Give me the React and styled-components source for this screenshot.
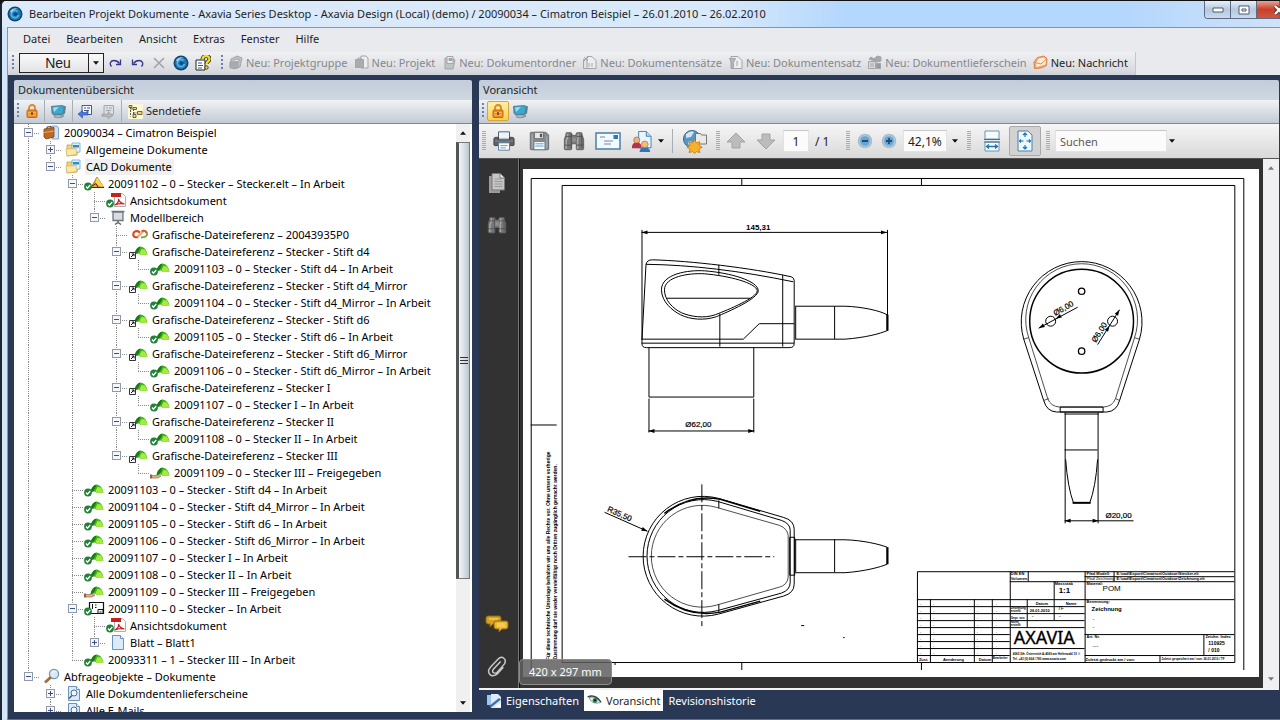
import React from "react";
import styled, { createGlobalStyle, css } from "styled-components";

const UI = '"Noto Sans", "Open Sans", sans-serif';
const NAVY = "#293955";

const Global = createGlobalStyle`
  *, *::before, *::after { box-sizing: border-box; }
  html, body, #root { height: 100%; }
  body { margin: 0; background: #111; overflow: hidden; font-family: ${UI}; font-size: 11px; color: #1e1e1e; }
  button, input { font: inherit; color: inherit; }
  h1, h2, p { margin: 0; font-weight: 400; }
  svg { display: block; flex: none; }
`;

/* ---------- window frame ---------- */
const Window = styled.div`
  height: 100vh;
  display: flex;
  flex-direction: column;
  border-top: 1px solid #111;
  border-left: 2px solid #1d2733;
  border-radius: 6px 0 0 0;
  overflow: hidden;
  background: linear-gradient(90deg, #d3e6fa 0, #c4defa 60%, #b3d5fb 62%);
`;
const TitleBar = styled.header`
  flex: none;
  height: 26px;
  display: flex;
  align-items: center;
  gap: 6px;
  padding-left: 5px;
  background: linear-gradient(90deg, #dceafa 0, #d8e9fb 56%, #b4d7fd 66%, #b4d7fd 88%, #cfe2f8 100%);
`;
const Title = styled.h1`
  flex: 1;
  font-size: 11px;
  line-height: 24px;
  white-space: nowrap;
`;
const Controls = styled.div`
  align-self: flex-start;
  display: flex;
  height: 18px;
  border: 1px solid #5b6b85;
  border-width: 0 0 1px 1px;
  border-radius: 0 0 0 4px;
  overflow: hidden;
`;
const ControlButton = styled.button`
  width: ${(p) => p.$width || 26}px;
  height: 17px;
  padding: 0 0 0 ${(p) => p.$inset || 0}px;
  display: grid;
  place-items: center;
  border: 0;
  border-right: 1px solid #5b6b85;
  background: ${(p) => (p.$close ? "linear-gradient(#e7a396, #c8402a 50%, #d2563c)" : "linear-gradient(#e6f0fa, #b5c8dd 50%, #c9dbee)")};
`;
const Client = styled.div`
  flex: 1;
  min-height: 0;
  margin-left: 5px;
  display: flex;
  flex-direction: column;
  border: 1px solid #8494ab;
  border-right: 0;
  border-bottom: 1px solid #5d6e8e;
  background: #e9eaed;
`;
const MenuBar = styled.nav`
  flex: none;
  height: 24px;
  display: flex;
  align-items: center;
  gap: 16px;
  padding: 0 0 2px 15px;
`;
const MenuItem = styled.button`
  border: 0;
  padding: 0;
  background: none;
  font-size: 11px;
  line-height: 20px;
`;
const ToolStrip = styled.div`
  flex: none;
  align-self: flex-start;
  height: 23px;
  display: flex;
  align-items: center;
  padding: 0 7px 2px 4px;
  border-right: 1px solid #c3c6cc;
  background: linear-gradient(#f0f1f3, #d9dbe0 80%, #cdd0d6);
`;
const Grip = styled.span`
  flex: none;
  width: 2px;
  height: ${(p) => p.$height || 16}px;
  margin: 0 ${(p) => p.$after || 4}px 0 ${(p) => p.$before || 0}px;
  background: repeating-linear-gradient(#6680b5 0 2px, transparent 2px 4px);
`;
const NewButton = styled.button`
  width: 70px;
  height: 20px;
  padding: 0 0 0 8px;
  border: 1px solid #222;
  background: linear-gradient(#fafafa, #e2e3e6);
  font: 14px/16px "Liberation Sans", Arial, sans-serif;
`;
const DropButton = styled.button`
  width: 16px;
  height: 20px;
  margin-left: -1px;
  padding: 0;
  display: grid;
  place-items: center;
  border: 1px solid #222;
  background: linear-gradient(#fafafa, #e2e3e6);
`;
const IconButton = styled.button`
  flex: none;
  width: ${(p) => p.$width || 22}px;
  height: ${(p) => p.$height || 20}px;
  padding: 0;
  display: grid;
  place-items: center;
  border: 1px solid ${(p) => p.$edge || "transparent"};
  border-radius: 2px;
  background: ${(p) => p.$fill || "none"};
`;
const ActionButton = styled.button`
  display: flex;
  align-items: center;
  gap: 3px;
  padding: 0;
  margin-left: ${(p) => p.$first ? 3 : 6}px;
  border: 0;
  background: none;
  color: ${(p) => (p.$live ? "#1e1e1e" : "#85878c")};
  font-size: 11px;
  line-height: 20px;
  white-space: nowrap;
`;

/* ---------- panels ---------- */
const Workspace = styled.main`
  flex: 1;
  min-height: 0;
  display: grid;
  grid-template-columns: minmax(0, 458px) minmax(0, 1fr);
  grid-template-rows: minmax(0, 1fr);
  gap: 7px;
  padding: 5px 1px 7px 6px;
  background: ${NAVY};
`;
const Panel = styled.section`
  min-width: 0;
  min-height: 0;
  display: flex;
  flex-direction: column;
`;
const PanelTitle = styled.h2`
  flex: none;
  height: 20px;
  padding-left: 4px;
  background: linear-gradient(#c3cddb, #cdd8e2);
  border-radius: 2px 2px 0 0;
  font-size: 11px;
  line-height: 20px;
`;
const PanelTools = styled.div`
  flex: none;
  height: 24px;
  display: flex;
  align-items: center;
  padding: 0 0 1px 3px;
  border-bottom: 1px solid #7d8798;
  background: linear-gradient(#f1f3f5, #c3cad4);
`;
const Split = styled.span`
  flex: none;
  width: 1px;
  height: ${(p) => p.$height || 22}px;
  margin: 0 ${(p) => p.$gap || 2}px;
  background: #a8aeb8;
`;

/* ---------- tree ---------- */
const TreeArea = styled.div`
  flex: 1;
  min-height: 0;
  display: flex;
  background: #fff;
`;
const TreeList = styled.ul`
  flex: 1;
  min-width: 0;
  margin: 0;
  padding: 0 0 0 3px;
  overflow: hidden;
  list-style: none;
`;
const TreeRow = styled.li`
  height: 17px;
  display: flex;
  align-items: center;
  white-space: nowrap;
`;
const DOTS_V = "repeating-linear-gradient(#8a8a8a 0 1px, transparent 1px 2px)";
const DOTS_H = "repeating-linear-gradient(90deg, #8a8a8a 0 1px, transparent 1px 2px)";
const heights = { full: "100%", top: "50%", none: "0" };
const Guide = styled.span`
  flex: none;
  width: 22px;
  height: 17px;
  display: grid;
  place-items: center;
  background-image: ${DOTS_V}${(p) => (p.$joint ? `, ${DOTS_H}` : "")};
  background-size: 1px ${(p) => heights[p.$line]}, 11px 1px;
  background-position: 11px 0, right 9px;
  background-repeat: no-repeat;
`;
const Expander = styled.button`
  width: 9px;
  height: 9px;
  padding: 0;
  border: 1px solid #9199a8;
  background:
    linear-gradient(#3a4f8c, #3a4f8c) center / 5px 1px no-repeat,
    ${(p) => (p.$open ? "" : "linear-gradient(#3a4f8c, #3a4f8c) center / 1px 5px no-repeat,")}
    #f6f7f9;
`;
const TreeLabel = styled.span`
  padding: 0 2px 0 1px;
  line-height: 16px;
  font-size: 11px;
  color: #000;
  ${(p) => p.$selected && css`background: #f0f0f0;`}
`;
const TreeScroll = styled.div`
  flex: none;
  width: 14px;
  margin-right: 2px;
  display: flex;
  flex-direction: column;
  align-items: center;
  background: #f0f0f0;
`;
const ScrollArrow = styled.button`
  flex: none;
  width: 14px;
  height: 18px;
  padding: 0;
  display: grid;
  place-items: center;
  border: 0;
  background: none;
`;
const Thumb = styled.div`
  flex: 0 1 437px;
  width: 14px;
  display: grid;
  place-items: center;
  border: 1px solid #777;
  border-left: 3px solid #555;
  background: linear-gradient(90deg, #f3f6f9, #d3dbe3 60%, #bac5d0);
`;

/* ---------- preview ---------- */
const ViewerTools = styled.div`
  flex: none;
  height: 35px;
  display: flex;
  align-items: center;
  padding-left: 3px;
  border-bottom: 1px solid #555;
  background: linear-gradient(#f6f6f6, #d9d9d9);
`;
const ViewerGrip = styled.span`
  flex: none;
  width: 4px;
  height: 20px;
  margin: 0 ${(p) => p.$after || 0}px 0 ${(p) => p.$before || 0}px;
  background: repeating-linear-gradient(#aaa 0 1px, transparent 1px 2px);
`;
const Field = styled.input`
  flex: none;
  width: ${(p) => p.$width}px;
  height: 22px;
  margin: 0 0 0 2px;
  padding: 0 4px;
  border: 1px solid #e3e3e3;
  border-top-color: #c8c8c8;
  background: #fbfbfb;
  text-align: ${(p) => p.$align || "left"};
  font-size: 12px;
  &::placeholder { color: #5a5a5a; opacity: 1; font-size: 11px; }
`;
const PageCount = styled.span`
  width: 30px;
  padding-left: 6px;
  font-size: 12px;
`;
const Viewer = styled.div`
  flex: 1;
  min-height: 0;
  display: flex;
  background: #323232;
  border-bottom: 2px solid #f2f2f2;
`;
const SideStrip = styled.div`
  flex: none;
  width: 40px;
  display: flex;
  flex-direction: column;
  align-items: center;
  gap: 16px;
  padding: 11px 4px 9px 0;
  border-right: 1px solid #777;
  box-shadow: 1px 0 #111;
`;
const Spacer = styled.span`
  flex: 1;
`;
const Canvas = styled.div`
  position: relative;
  flex: 1;
  min-width: 0;
  padding: 10px 4px 11px;
`;
const Sheet = styled.svg`
  width: 100%;
  height: 100%;
  background: #fff;
`;
const SizeBadge = styled.p`
  position: absolute;
  left: 0;
  bottom: 3px;
  padding: 3px 9px;
  border: 1px solid #8c8c8c;
  border-radius: 4px;
  background: rgba(95, 95, 95, 0.85);
  color: #fff;
  font-size: 11px;
  line-height: 18px;
`;
const ViewerScroll = styled.div`
  flex: none;
  width: 16px;
  display: flex;
  flex-direction: column;
  align-items: center;
  justify-content: space-between;
  background: #f0f0f3;
`;
const Tabs = styled.div`
  flex: none;
  height: 22px;
  display: flex;
  align-items: flex-start;
  padding-left: 2px;
  background: ${NAVY};
`;
const Tab = styled.button`
  height: 21px;
  display: flex;
  align-items: center;
  gap: 4px;
  padding: 0 ${(p) => (p.$active ? 3 : 5)}px;
  border: 0;
  background: ${(p) => (p.$active ? "#fff" : "none")};
  color: ${(p) => (p.$active ? "#1e1e1e" : "#fff")};
  font-size: 11px;
`;

/* ---------- icons ---------- */
const Caret = ({ up, color = "#111" }) => (
  <svg width="6" height="4" viewBox="0 0 7 4"><path d={up ? "M0 4 3.500 0 7 4z" : "M0 0h7L3.500 4z"} fill={color} /></svg>
);
const Logo = ({ size = 16 }) => (
  <svg width={size} height={size} viewBox="0 0 16 16">
    <circle cx="8" cy="8" r="7.500" fill="#12456f" />
    <circle cx="8" cy="8" r="6" fill="#1d78b4" />
    <path d="M11.500 5A4.600 4.600 0 1 0 12.500 9H10.500A2.700 2.700 0 1 1 9.700 6z" fill="#4fb2e2" />
    <circle cx="8.500" cy="8.300" r="1.800" fill="#0e4a7c" />
    <path d="M3 5Q6 1 11 2.600 6 3.500 4.500 7z" fill="#b8e4f8" opacity=".8" />
  </svg>
);
const Redo = ({ flip }) => (
  <svg width="13" height="10" viewBox="0 0 13 10">
    <g transform={flip ? "matrix(-1 0 0 1 13 0)" : undefined} fill="none" stroke="#34358f" strokeWidth="1.300">
      <path d="M2.500 8.500C0 6 1.500 2.500 5 2.500c2.500 0 4 1 5.500 3" /><path d="M11.500 1.500v5H7" />
    </g>
  </svg>
);
const Cross = () => (
  <svg width="12" height="12" viewBox="0 0 12 12"><path d="M1 1 11 11M11 1 1 11" stroke="#a0a2a6" strokeWidth="1.500" /></svg>
);
const Help = () => (
  <svg width="16" height="16" viewBox="0 0 16 16">
    <path d="M1 5h9v10H1z" fill="#fff" stroke="#222" />
    <path d="M3 8h4M3 10.500h5M3 13h4" stroke="#3850a0" />
    <path d="M7.500 4.500C7.500 0 14.500 0 14.500 4c0 2.500-3 2.500-3 5" fill="none" stroke="#222" strokeWidth="4" />
    <path d="M7.500 4.500C7.500 0 14.500 0 14.500 4c0 2.500-3 2.500-3 5" fill="none" stroke="#f2e020" strokeWidth="2.400" />
    <circle cx="11.500" cy="12.500" r="1.700" fill="#f2e020" stroke="#222" strokeWidth=".8" />
  </svg>
);
const GreyIcon = ({ kind }) => (
  <svg width="15" height="15" viewBox="0 0 15 15" stroke="#a3a5a9" fill="#cfd1d4">
    {kind === "group" && (<><path d="M3 4 9 1l5 2-2 9-6 2-4-2z" fill="#bfc1c5" /><path d="M2 7h8v6H2z" fill="#a9abaf" /><path d="M6 4.500 11 4v2L6 7z" fill="#ededee" /></>)}
    {kind === "project" && (<><path d="M7 1h5l2 2v10H7z" fill="#ededee" /><path d="M1.500 4.500h8v8h-8z" fill="#a9abaf" /><path d="M4 4.500V3h3v1.500" fill="none" /></>)}
    {kind === "folder" && (<><path d="M4 3h7l3 2-2 9H4z" fill="#c0c2c6" /><path d="M6 1.500h6v7H6z" fill="#ededee" /><path d="M8 3.500h3v2H8z" fill="#97999d" /></>)}
    {kind === "sets" && (<><path d="M1.500 4.500h8v9h-8z" fill="#e2e3e5" /><path d="M5 1.500h5l4 4v8H5z" fill="#ededee" /><path d="M2 2l4 4M6 2 2 6M7 8v4M10 8v4" /></>)}
    {kind === "set" && (<><path d="M3 1.500h7l4 4v8H3z" fill="#ededee" /><path d="M1.500 3.500h6l-2 4v5h-2v-5z" fill="#b5b7bb" /><path d="M9 6v5" /></>)}
    {kind === "delivery" && (<><path d="M1.500 6.500h7v7h-7z" fill="#d8d9dc" /><path d="M2 4l2-2 3 2 3-3 4 1v4l-4 1z" fill="#a5a7ab" /><path d="M9.500 8.500h4v5h-4z" fill="#98999d" /><path d="M3 9h4M3 11h4" /></>)}
  </svg>
);
const MailOrange = () => (
  <svg width="15" height="15" viewBox="0 0 15 15">
    <path d="M1 7 4.500 2.500 11 1l3 2.500-.5 7L8 13l-6.500.5z" fill="#f7a765" stroke="#e08040" /><path d="M3 8 5.500 3.500l5.500-1 2 2-.5 5-9 2.500z" fill="#fdeee0" /><path d="M2 7.500 8 9l5.500-5" fill="none" stroke="#e88b48" />
  </svg>
);
const Lock = () => (
  <svg width="12" height="14" viewBox="0 0 12 14">
    <path d="M3 7V4a3 3 0 0 1 6 0v3" fill="none" stroke="#d98a28" strokeWidth="1.800" />
    <rect x="1" y="6" width="10" height="7.500" rx="1" fill="#f08a1c" stroke="#c8641a" /><path d="M2 8.500h8M2 11h8" stroke="#fbbb58" /><path d="M6 8v3" stroke="#7a3a10" strokeWidth="1.500" />
  </svg>
);
const Monitor = () => (
  <svg width="17" height="15" viewBox="0 0 17 15">
    <path d="M1 2 12 1l4 1.500-1 7-3 2H3.500L1.500 9z" fill="#5d7f92" /><path d="M2 3l10-1 1.500 1-1 6.500-9 .5z" fill="#38a9d0" /><path d="M3 3.500 9 3 4 8z" fill="#9fe0f2" /><path d="M4 12.500q5 2.500 10-1" fill="none" stroke="#8a979f" strokeWidth="1.600" />
  </svg>
);
const DocArrow = ({ grey }) => (
  <svg width="16" height="15" viewBox="0 0 16 15">
    <path d="M5 1.500h9.500v9H5z" fill={grey ? "#dcdee0" : "#f5f8fd"} stroke={grey ? "#a5a9ae" : "#47598a"} /><path d="M7 4h2M10 4h3M7 6.500h5" stroke={grey ? "#a5a9ae" : "#47598a"} />
    {grey ? <path d="M3 10h6V7.500l5 4-5 3.200V12.500H3z" fill="#b4b8bd" stroke="#999" strokeWidth=".6" /> : <path d="M1 10l4.500-3.500v2h3L11 7v4H5.500v3z" fill="#4a78dd" stroke="#2448a8" strokeWidth=".6" />}
  </svg>
);
const Hierarchy = () => (
  <svg width="15" height="15" viewBox="0 0 15 15"><path d="M0 0h15v15H0z" fill="#fbf8d8" /><path d="M2.500 3v9.500M2.500 5h3M5.500 5v6M5.500 9h4" fill="none" stroke="#555" strokeDasharray="2 1" /><path d="M1 1.500h3v2H1zM5 3.500h3.500v2H5zM5 10.500h3v3H5zM9.500 7.500H14v3H9.500z" fill="#f6dc50" stroke="#444" strokeWidth=".8" /></svg>
);
const Printer = () => (
  <svg width="22" height="22" viewBox="0 0 24 24">
    <path d="M6 2h12v8H6z" fill="#eef3f7" stroke="#456" /><path d="M3 8h3v3h12V8h3q2 0 2 2v6q0 1-1 1H2q-1 0-1-1v-6q0-2 2-2z" fill="#606367" stroke="#3d4044" /><path d="M2 12h20" stroke="#8b8f94" /><path d="M6 14h12v8H6z" fill="#fff" stroke="#4d7896" /><path d="M8 17h8M8 19.500h6" stroke="#5b95c4" />
  </svg>
);
const Floppy = () => (
  <svg width="22" height="22" viewBox="0 0 24 24">
    <path d="M2.500 3.500q0-1 1-1h16l3 3v15q0 1-1 1h-18q-1 0-1-1z" fill="#8b8e91" stroke="#66696c" /><path d="M7 2.500h10v7H7z" fill="#e6e6e6" stroke="#666" /><path d="M13 4h2.500v4H13z" fill="#555" /><path d="M6.500 12.500h12v9h-12z" fill="#f4fafd" stroke="#5b7f96" /><path d="M8 15h9M8 17.500h9" stroke="#4b9fcc" /><path d="M4.500 5v15M20.500 7v13" stroke="#b0b3b5" />
  </svg>
);
const Binoculars = ({ size = 22 }) => (
  <svg width={size} height={size} viewBox="0 0 24 24">
    <path d="M3.500 3h5.500l1.500 3h3L15 3h5.500l.5 3 1.500 4v10.500q0 1-1 1h-6q-1 0-1-1V15h-5v5.500q0 1-1 1h-6q-1 0-1-1V10L3 6z" fill="#77787a" stroke="#5c5d5f" />
    <path d="M5 4v4l-1.500 4v8.500M16.500 4v4l-.500 4v8.500" stroke="#ababad" strokeWidth="1.600" fill="none" /><path d="M9 4v16M20.500 5v15" stroke="#4f5052" /><path d="M2 16.500h7.500M14.500 16.500h8M3 7h6M15 7h6" stroke="#4f5052" /><path d="M10 8.500h4v4h-4z" fill="#8d8f91" />
  </svg>
);
const Card = () => (
  <svg width="26" height="18" viewBox="0 0 26 18"><path d="M1 1h24v16H1z" fill="#f3faff" stroke="#4b7ea4" strokeWidth="1.500" /><path d="M18.500 3h4.500v4h-4.500z" fill="#2a78b8" /><path d="M5 5h5M9 9h9M9 12h7" stroke="#78a" /></svg>
);
const People = () => (
  <svg width="21" height="23" viewBox="0 0 22 24">
    <path d="M8 1.500h8l5 5v12H8z" fill="#eaf4fd" stroke="#3f82bd" /><path d="M16 1.500v5h5" fill="#b5d8f2" stroke="#3f82bd" /><path d="M1 19q-.500-6 5-6t5 6z" fill="#b8324c" /><circle cx="6" cy="10.500" r="3.200" fill="#eeb27e" stroke="#a85e38" strokeWidth=".7" /><path d="M9 23q0-5 5.500-5t5.500 5z" fill="#2e75bc" /><circle cx="14.500" cy="15" r="3.500" fill="#f4be78" stroke="#ab6c34" strokeWidth=".7" />
  </svg>
);
const GlobeStar = () => (
  <svg width="26" height="25" viewBox="0 0 26 25">
    <circle cx="10" cy="10" r="8.500" fill="#5797c4" stroke="#39658b" /><path d="M4 5q5-4 8-2l-3 5-5 1zM7 12l4 1-1 5-4-3z" fill="#cfe5f4" /><path d="M13.500 4.500h5l1 1.500h5v9h-11z" fill="#ebe9e0" stroke="#777" /><path d="m12.500 10.500 1.800 3.300 3.600-1-1 3.600 3.300 1.800-3.300 1.800 1 3.600-3.600-1-1.800 2-1.800-2-3.600 1 1-3.600-3.300-1.800 3.300-1.800-1-3.600 3.600 1z" fill="#f8b22a" stroke="#c57512" strokeWidth=".8" />
  </svg>
);
const BigArrow = ({ down }) => (
  <svg width="20" height="20" viewBox="0 0 20 20"><path transform={down ? "rotate(180 10 10)" : undefined} d="M10 2 19 11h-5v6H6v-6H1z" fill="#bcbcbc" stroke="#a3a3a3" /></svg>
);
const ZoomDot = ({ plus }) => (
  <svg width="16" height="16" viewBox="0 0 16 16"><circle cx="8" cy="8" r="6.500" fill="#a9cce4" stroke="#a9bdcb" strokeWidth="1.500" /><circle cx="8" cy="8" r="4.800" fill="#69a5ce" /><path d={plus ? "M5 8h6M8 5v6" : "M5 8h6"} stroke="#1d4e7c" strokeWidth="1.800" /></svg>
);
const FitWidth = () => (
  <svg width="18" height="22" viewBox="0 0 18 22"><path d="M2 1h14v8H2zM2 12h14v9H2z" fill="#f6fbfe" stroke="#6a94b0" /><path d="M1 9.500h16M1 12h16" stroke="#44718f" /><path d="M4 16.500h10M6 14.500l-2.500 2L6 18.500M12 14.500l2.500 2-2.500 2" fill="none" stroke="#2272ae" strokeWidth="1.300" /></svg>
);
const FitPage = () => (
  <svg width="18" height="22" viewBox="0 0 18 22"><path d="M2 1h10l4 4v16H2z" fill="#eef7fd" stroke="#4484b0" /><path d="M9 3v4M9 15v4M3.500 11h4M10.500 11h4M7 5l2-2 2 2M7 17l2 2 2-2M5 9.500 3.500 11 5 12.500M13 9.500l1.500 1.500-1.500 1.500" fill="none" stroke="#2272ae" strokeWidth="1.200" /></svg>
);
const Pages = () => (
  <svg width="20" height="22" viewBox="0 0 20 22"><path d="M2 4h11v17H2z" fill="#9c9c9c" /><path d="M5 1.500h8l4.500 4.500v12H5z" fill="#c6c6c6" stroke="#777" /><path d="M7.500 7h7M7.500 9.500h8M7.500 12h8M7.500 14.500h8" stroke="#999" /><path d="M13 1.500V6h4.500" fill="#eee" stroke="#777" /></svg>
);
const Chat = () => (
  <svg width="24" height="18" viewBox="0 0 24 18"><path d="M3 1h11q2 0 2 2v4q0 2-2 2H8l-3 3V9H3Q1 9 1 7V3q0-2 2-2z" fill="#d8a01c" stroke="#8a640e" /><path d="M11 6h10q2 0 2 2v4q0 2-2 2h-4l-3 3v-3h-3q-2 0-2-2V8q0-2 2-2z" fill="#edb92c" stroke="#8a640e" /><path d="M4 4h9M12 9h8M12 11h8" stroke="#f9df84" /></svg>
);
const Clip = () => (
  <svg width="20" height="22" viewBox="0 0 22 24"><path d="m15 7-8 8.500q-2 3 .500 4t4-1L19 10q2.500-4-.500-6.500T12 4.500L4 13q-4 4.500-1 8t8 0l7-7.500" fill="none" stroke="#c9c9c9" strokeWidth="1.600" /></svg>
);
const TabDoc = () => (
  <svg width="16" height="16" viewBox="0 0 16 16"><path d="M1 2h7v10H1z" fill="#9bc6f2" /><path d="M5 1h7l3 3v11H5z" fill="#dcebfb" /><path d="m3 13 10-8 2 1.500L5 14.500z" fill="#4b6ea8" /><path d="M9 14h6v-4z" fill="#fff" /></svg>
);
const Eye = () => (
  <svg width="15" height="12" viewBox="0 0 15 12"><path d="M2 2.500q7-2 12 5-5 1.500-8 0Q3 6 2 2.500z" fill="#d7eee0" stroke="#5c6d69" strokeWidth=".6" /><circle cx="8" cy="5.500" r="2.400" fill="#348058" /><circle cx="8" cy="5.300" r="1" fill="#111" /><path d="M.5 2Q8-1.500 14 7" fill="none" stroke="#33443f" strokeWidth="1.300" /></svg>
);

const Check = () => (<><circle cx="5" cy="11.500" r="3.900" fill="#23803a" /><path d="m3 11.500 1.500 1.700L7.200 10" fill="none" stroke="#fff" strokeWidth="1.300" /></>);
const Dome = () => (<><path d="M7.500 11Q9 4 13.500 3.500 19 4 20.500 11.500L14 12l-2-1.500z" fill="#3db51e" /><path d="M7.500 11Q9 4 13.500 3.500L12 7.500l-2 3z" fill="#1c7a16" /><path d="m14.500 6 3.500.5 2.500 5-6.500.5-1.500-2z" fill="#a8ea3c" /></>);
const PageGlyph = () => (<><path d="M7.500 1.500h8l3 3v11h-11z" fill="#dcebfa" stroke="#6d93bd" /><path d="M15.500 1.500v3h3" fill="#fff" stroke="#6d93bd" /></>);
const treeGlyphs = {
  case: <><path d="M13 2h5l1.500 2v11H13z" fill="#cfe3f8" stroke="#6793c4" strokeWidth=".8" /><path d="M5 5l10-1.500V13L7 15l-2-2z" fill="#b96a25" stroke="#7b4318" strokeWidth=".8" /><path d="M8 4.500V3l4-.5V4" fill="none" stroke="#5d341a" /><path d="M5 8.500 15 7" stroke="#eda95d" /></>,
  folder: <><path d="M6 4h5l1 1h5l-1 9-10 1z" fill="#f3d470" stroke="#b99a3d" strokeWidth=".7" /><path d="M11 2h8v9l-8 1z" fill="#e2f1fc" stroke="#6faace" strokeWidth=".8" /><path d="M12 4h6v2.500h-6z" fill="#2f8dc4" /><path d="m5 8 10-.5 1 6L6 15z" fill="#fae9a4" stroke="#c7aa50" strokeWidth=".6" /></>,
  warn: <><path d="m14 2 7 10.500H8z" fill="#eea22a" stroke="#8a5a14" strokeWidth=".7" /><path d="m14 2-2 7 9 3.500z" fill="#f9d655" /><path d="m9 11 4-2.500 2 3.500M8 12.500h13" fill="none" stroke="#3d2a0c" /><Check /></>,
  pdf: <><path d="M9.500 1.500h8l3 3v10h-11z" fill="#fff" stroke="#999" strokeWidth=".8" /><path d="M6 1h10v4H6z" fill="#c8201e" /><path d="M10 13q4-2 3.500-6 1 4 6 5-5-1-9.500 1" fill="none" stroke="#c8201e" strokeWidth="1.200" /><Check /></>,
  screen: <><path d="M6.500 2.500h13M8 3h10v8.500H8z" fill="#d9dde2" stroke="#6f767e" strokeWidth="1.300" /><path d="M13 12v2M10 15.500l3-2 3 2" fill="none" stroke="#555" strokeWidth="1.300" /></>,
  link: <><path d="M11 11Q7 12 6.300 9 6 5 10.500 5L13 6.500" fill="none" stroke="#d84a1c" strokeWidth="2.200" /><path d="m10.500 11 5.500-5.500" stroke="#e9a87c" strokeWidth="2.400" /><path d="M14.500 5Q19 4 20 7.500T14 11.500" fill="none" stroke="#7aa63c" strokeWidth="2" /><path d="M15 5q4-1 4.500 2" fill="none" stroke="#e2572a" strokeWidth="1.800" /></>,
  ref: <><Dome /><path d="M2.500 9.500h6v6h-6z" fill="#fff" stroke="#333" /><path d="m4 14 3-3M4.800 11H7v2.200" stroke="#111" fill="none" /></>,
  part: <><Dome /><Check /></>,
  hand: <><Dome /><path d="M2 11.500h6l4 .5-3 2H3z" fill="#e2b18c" stroke="#8a5838" strokeWidth=".6" /><path d="M1 10.500h2v4H1z" fill="#876550" /></>,
  sheet: <><path d="M6.500 2.500h14v11h-14z" fill="#fff" stroke="#111" strokeWidth="1.200" /><path d="M9.500 4v5M12 5h1.500M12 7.500h1.500M15 9.500h5v4h-5zM16.500 12h2" stroke="#111" fill="none" /><Check /></>,
  page: <PageGlyph />,
  lens: <><circle cx="15" cy="6" r="4.600" fill="#d5e9f7" stroke="#7896ae" strokeWidth="1.300" /><path d="M12 9 6 14.500" stroke="#a36a42" strokeWidth="2.800" /><path d="M13 5q1-2 3-1.500" stroke="#fff" fill="none" /></>,
  search: <><PageGlyph /><circle cx="13" cy="8" r="3" fill="#f2f8fd" stroke="#49708f" /><path d="m11 10.500-3 3" stroke="#3a5d7a" strokeWidth="1.500" /></>,
};
const TreeIcon = ({ kind }) => <svg width="24" height="17" viewBox="0 0 24 17">{treeGlyphs[kind]}</svg>;

/* ---------- data ---------- */
// [depth, icon, label, state]: state is "open", "closed" or absent for a leaf
const nodes = [
  [0, "case", "20090034 – Cimatron Beispiel", "open"],
  [1, "folder", "Allgemeine Dokumente", "closed"],
  [1, "folder", "CAD Dokumente", "open"],
  [2, "warn", "20091102 – 0 – Stecker – Stecker.elt – In Arbeit", "open"],
  [3, "pdf", "Ansichtsdokument"],
  [3, "screen", "Modellbereich", "open"],
  [4, "link", "Grafische-Dateireferenz – 20043935P0"],
  [4, "ref", "Grafische-Dateireferenz – Stecker - Stift d4", "open"],
  [5, "part", "20091103 – 0 – Stecker - Stift d4 – In Arbeit"],
  [4, "ref", "Grafische-Dateireferenz – Stecker - Stift d4_Mirror", "open"],
  [5, "part", "20091104 – 0 – Stecker - Stift d4_Mirror – In Arbeit"],
  [4, "ref", "Grafische-Dateireferenz – Stecker - Stift d6", "open"],
  [5, "part", "20091105 – 0 – Stecker - Stift d6 – In Arbeit"],
  [4, "ref", "Grafische-Dateireferenz – Stecker - Stift d6_Mirror", "open"],
  [5, "part", "20091106 – 0 – Stecker - Stift d6_Mirror – In Arbeit"],
  [4, "ref", "Grafische-Dateireferenz – Stecker I", "open"],
  [5, "part", "20091107 – 0 – Stecker I – In Arbeit"],
  [4, "ref", "Grafische-Dateireferenz – Stecker II", "open"],
  [5, "part", "20091108 – 0 – Stecker II – In Arbeit"],
  [4, "ref", "Grafische-Dateireferenz – Stecker III", "open"],
  [5, "hand", "20091109 – 0 – Stecker III – Freigegeben"],
  [2, "part", "20091103 – 0 – Stecker - Stift d4 – In Arbeit"],
  [2, "part", "20091104 – 0 – Stecker - Stift d4_Mirror – In Arbeit"],
  [2, "part", "20091105 – 0 – Stecker - Stift d6 – In Arbeit"],
  [2, "part", "20091106 – 0 – Stecker - Stift d6_Mirror – In Arbeit"],
  [2, "part", "20091107 – 0 – Stecker I – In Arbeit"],
  [2, "part", "20091108 – 0 – Stecker II – In Arbeit"],
  [2, "hand", "20091109 – 0 – Stecker III – Freigegeben"],
  [2, "sheet", "20091110 – 0 – Stecker – In Arbeit", "open"],
  [3, "pdf", "Ansichtsdokument"],
  [3, "page", "Blatt – Blatt1", "closed"],
  [2, "part", "20093311 – 1 – Stecker III – In Arbeit"],
  [0, "lens", "Abfrageobjekte – Dokumente", "open"],
  [1, "search", "Alle Dokumdentenlieferscheine", "closed"],
  [1, "search", "Alle E-Mails", "closed"],
];

const continues = (index, depth) => {
  for (let i = index + 1; i < nodes.length; i += 1) {
    if (nodes[i][0] < depth) return false;
    if (nodes[i][0] === depth) return true;
  }
  return depth > 0 && nodes[index][1] === "search";
};

const TreeNode = ({ index }) => {
  const [depth, icon, label, state] = nodes[index];
  const guides = [];
  for (let d = 0; d < depth; d += 1) {
    guides.push(<Guide key={d} $line={continues(index, d) ? "full" : "none"} />);
  }
  return (
    <TreeRow role="treeitem" aria-level={depth + 1}>
      {guides}
      <Guide $joint $line={continues(index, depth) ? "full" : "top"}>
        {state && <Expander type="button" $open={state === "open"} aria-label={`${label} umschalten`} />}
      </Guide>
      <TreeIcon kind={icon} />
      <TreeLabel $selected={label === "CAD Dokumente"}>{label}</TreeLabel>
    </TreeRow>
  );
};

const actions = [
  ["group", "Neu: Projektgruppe"],
  ["project", "Neu: Projekt"],
  ["folder", "Neu: Dokumentordner"],
  ["sets", "Neu: Dokumentensätze"],
  ["set", "Neu: Dokumentensatz"],
  ["delivery", "Neu: Dokumentlieferschein"],
];

/* ---------- technical drawing ---------- */
const Arrow = ({ x, y, angle = 0 }) => <path transform={`translate(${x} ${y}) rotate(${angle})`} d="M0 0-6-2v4z" fill="#000" stroke="none" />;

const Drawing = () => (
  <Sheet viewBox="523 169 736 509" preserveAspectRatio="xMidYMid meet" role="img" aria-label="Technische Zeichnung" fontFamily='"Liberation Sans", Arial, sans-serif'>
    <g fill="none" stroke="#000" strokeWidth="1">
      <path d="M530.500 671V178.500H1244.500V671M561.500 185.500H1235.500V663.500H561.500zM741.500 178v7M921.500 178v7M530 425.500h26M614.500 663v3M741.500 663v8M921.500 663v8" />
      {/* side view */}
      <path d="M641.500 230v110M887.500 230v101M641 232.500h247" />
      <path d="M641.500 340 645.500 265Q646 260 652 260C690 261 750 268 791 277q3 1 3 4v63q0 4-5 4H646q-4.500 0-4.500-4z" />
      <path d="M645.500 264.500C690 265 740 271 793 282M641 339.500h102l16-15.500h35M641 343.500h153M782.500 275v72M718.500 265v10M719.500 314v33" />
      <path d="M661 290C661 274 688 270 704 271 730 273 758 281 758 291 758 299 728 312 716 317 704 321 690 320 680 315 672 311 661 302 661 290z" />
      <path d="M664 290C664 277 688 273 704 274 728 276 756 283 757 291 757 298 728 310 715 315 704 319 690 317 681 313 673 309 664 301 664 290zM666 298.500h84" />
      <path d="M795.500 306.500v33M834.500 306.500v33M795 306.500h50C862 307 880 311 887 315v16C880 334 865 338 845 339.500h-50" />
      <path d="M887.500 315v16" strokeWidth="2" />
      <path d="M648.500 348v49.500h105V348M648.500 399v34M753.500 399v34M648 431.500h106" />
      {/* front view */}
      <path d="M1024 339.500A60.500 60.500 0 1 1 1140 339.500L1120 401q-3 11-13 11.500h-50q-10-.5-13-11.500z" />
      <path d="M1029 338A56 56 0 1 1 1135 338L1116 399q-3 8-12 8.500h-44q-9-.5-12-8.500zM1024 339.500l5-1.500M1140 339.500l-5-1.500M1044 401l5-2M1120 401l-4-2" strokeWidth=".7" />
      <circle cx="1082" cy="321.500" r="52" strokeWidth="1.500" />
      <circle cx="1082" cy="291.500" r="3.200" strokeWidth="1.300" /><circle cx="1082" cy="351.500" r="3.200" strokeWidth="1.300" />
      <circle cx="1051" cy="321.500" r="5" /><circle cx="1113" cy="321.500" r="5" />
      <path d="M1039 328.500 1078 307.500M1120 310l-22 35" />
      <path d="M1060.500 407.500h43v5h-43zM1065.500 413v111M1098.500 413v111M1065 414.500h34M1065 450.500h33M1065 521.500h69M1066 460q2 28 8 44M1098 460q-2 28-8 44" />
      <path d="M1073 503.500h18" strokeWidth="2" />
      {/* top view */}
      <path d="M718 499 783 518q11 3 11 12v55q0 9-11 12L718 615A60 60 0 1 1 718 499z" />
      <path d="M717 502 781 521q9 3 9 10v52q0 8-9 11L717 611.500A56.500 56.500 0 1 1 717 502z" />
      <path d="M716 508 779 526q8 3 9 10v42q-1 8-9 10L716 606A51 51 0 1 1 716 508z" strokeWidth=".7" />
      <path d="M664 514Q690 494 720 500L760 512M664 600Q690 619 720 613L760 602" strokeWidth="1.500" />
      <path d="M718.500 501v8M718.500 605v8M789.500 538h5v38h-5z" />
      <path d="M628 557.500h146M701.500 485v143" strokeDasharray="18 3 5 3" />
      <path d="M795.500 540v33M834.500 540v33M795 540.500h50C862 541 880 545 887 548v17C880 568 865 572 845 573.500h-50" />
      <path d="M887.500 548v17" strokeWidth="2" />
      <path d="M604 513 647 532M801 626.500h3M843 638.500h1.500" />
      {/* title block */}
      <path d="M917.500 663V572.500H1235M1010.500 572v91M1085.500 572v91M917 600.500h318M917 607.500h168M917 614.500h168M917 621.500h168M917 628.500h168M917 635.500h93M917 642.500h93M917 649.500h168M917 656.500h93M930.500 600v63M974.500 600v63M992.500 600v63M1010 582.500h225M1028.500 572v10M1054.500 582v39M1027.500 600v28M1085 577.500h150M1114.500 572v10M1085 635.500h150M1204.500 635v21M1085 656.500h150M1160.500 656v7" />
    </g>
    <Arrow x={641} y={232.5} angle={180} /><Arrow x={887} y={232.5} />
    <Arrow x={648} y={431.5} angle={180} /><Arrow x={754} y={431.5} />
    <Arrow x={1065} y={521.5} angle={180} /><Arrow x={1099} y={521.5} />
    <Arrow x={647} y={532} angle={24} />
    <Arrow x={1039} y={328.5} angle={150} /><Arrow x={1056} y={319} angle={150} />
    <Arrow x={1120} y={310} angle={-58} /><Arrow x={1110} y={326} angle={-58} />
    <g fontSize="8" textAnchor="middle" stroke="#000" strokeWidth=".2">
      <text x="758" y="230" fontWeight="700" strokeWidth="0">145,31</text>
      <text x="698" y="428">Ø62,00</text>
      <text x="1119" y="519">Ø20,00</text>
      <text transform="translate(618 517) rotate(24)">R35,50</text>
      <text transform="translate(1065 311) rotate(-29)">Ø6,00</text>
      <text transform="translate(1102 334) rotate(-58)">Ø6,00</text>
    </g>
    <g fontSize="5" fontWeight="700">
      <text transform="translate(549 661) rotate(-90)">Für diese technische Unterlage behalten wir uns alle Rechte vor. Ohne unsere vorherige</text>
      <text transform="translate(556 661) rotate(-90)">Zustimmung darf sie weder vervielfältigt noch Dritten zugänglich gemacht werden.</text>
    </g>
    <g fontSize="4" fontWeight="700">
      <text x="1011" y="576">DIN EN</text><text x="1011" y="581">Volumen</text>
      <text x="1087" y="576">Pfad Modell:</text><text x="1117" y="576">E:\cad\Export\Cimatron\Outdoor\Stecker.elt</text>
      <text x="1087" y="581" fontWeight="400">Pfad Zeichnung:</text><text x="1117" y="581">E:\cad\Export\Cimatron\Outdoor\Zeichnung.elt</text>
      <text x="1055" y="586">Massstab</text><text x="1087" y="586">Material:</text>
      <text x="1036" y="606">Datum</text><text x="1066" y="606">Name</text><text x="1087" y="604">Benennung:</text>
      <text x="1011" y="610" fontSize="3">Zeichnung</text><text x="1011" y="613" fontSize="3">erstellt</text><text x="1011" y="620" fontSize="3">Gepr. von</text>
      <text x="1011" y="624" fontSize="3">Norm</text><text x="1011" y="627" fontSize="3">erstellt</text>
      <text x="1087" y="639">Art. Nr.</text><text x="1206" y="639">Zeichn. Index</text>
      <text x="1013" y="656" fontSize="3">4060 5th. Österreich A-4060 am Heilerwald 10 ½</text>
      <text x="1013" y="661" fontSize="3">Tel. +43 (0) 664 / 780 www.axavia.com</text>
      <text x="919" y="662">Zust.</text><text x="943" y="662">Aenderung</text><text x="979" y="662">Datum</text><text x="993" y="660" fontSize="3">Bearbeiter</text>
      <text x="1086" y="662">Zuletzt gedruckt am / von:</text><text x="1162" y="661" fontSize="3">Zuletzt gespeichert am / von: 26.01.2010 / TF</text>
    </g>
    <g fontSize="6">
      <text x="1092" y="612" fontWeight="700">Zeichnung</text><text x="1030" y="613" fontWeight="700" fontSize="4">26.01.2010</text><text x="1058" y="611" fontSize="5">TF</text>
      <text x="1209" y="646" fontSize="5" fontWeight="700">110925</text><text x="1209" y="653" fontSize="5" fontWeight="700">/ 010</text>
      <text x="1093" y="622">-</text><text x="1093" y="630">-</text><text x="1093" y="649">---</text><text x="1032" y="619">-</text><text x="1059" y="619">-</text>
      {[0, 1, 2, 3, 4, 5, 6, 7].map((r) => [920, 933, 977, 996].map((x) => <text key={`${x}-${r}`} x={x} y={606 + r * 7} fontSize="4">-</text>))}
    </g>
    <text x="1103" y="592" fontSize="8">POM</text>
    <text x="1059" y="594" fontSize="8" fontWeight="700">1:1</text>
    <text x="1014" y="645" fontSize="18" fontFamily='"Noto Sans", sans-serif' stroke="#000" strokeWidth=".3">AXAVIA</text>
  </Sheet>
);

/* ---------- page ---------- */
export default function App() {
  return (
    <>
      <Global />
      <Window>
        <TitleBar>
          <Logo />
          <Title>Bearbeiten Projekt Dokumente - Axavia Series Desktop - Axavia Design (Local) (demo) / 20090034 – Cimatron Beispiel – 26.01.2010 – 26.02.2010</Title>
          <Controls>
            <ControlButton type="button" aria-label="Minimieren"><svg width="12" height="6" viewBox="0 0 12 6"><path d="M1 1h10v4H1z" fill="#fff" stroke="#4c5a70" /></svg></ControlButton>
            <ControlButton type="button" aria-label="Maximieren"><svg width="12" height="10" viewBox="0 0 12 10"><path d="M1 1h10v8H1zM4 4h4v2H4z" fill="#fff" stroke="#4c5a70" /></svg></ControlButton>
            <ControlButton type="button" $close $width={23} $inset={16} aria-label="Schließen"><svg width="12" height="10" viewBox="0 0 12 10"><path d="m2 1 8 8M10 1 2 9" stroke="#4c2a2a" strokeWidth="4" /><path d="m2 1 8 8M10 1 2 9" stroke="#fff" strokeWidth="2.400" /></svg></ControlButton>
          </Controls>
        </TitleBar>
        <Client>
          <MenuBar>
            {["Datei", "Bearbeiten", "Ansicht", "Extras", "Fenster", "Hilfe"].map((m) => <MenuItem type="button" key={m}>{m}</MenuItem>)}
          </MenuBar>
          <ToolStrip>
            <Grip $after={5} />
            <NewButton type="button">Neu</NewButton>
            <DropButton type="button" aria-label="Neu Auswahl"><Caret /></DropButton>
            <IconButton type="button" aria-label="Wiederholen"><Redo /></IconButton>
            <IconButton type="button" aria-label="Rückgängig"><Redo flip /></IconButton>
            <IconButton type="button" aria-label="Löschen"><Cross /></IconButton>
            <IconButton type="button" aria-label="Axavia"><Logo /></IconButton>
            <IconButton type="button" aria-label="Hilfe"><Help /></IconButton>
            <Grip $before={7} $after={2} />
            {actions.map(([kind, label], i) => <ActionButton type="button" key={kind} $first={i === 0}><GreyIcon kind={kind} />{label}</ActionButton>)}
            <ActionButton type="button" $live><MailOrange />Neu: Nachricht</ActionButton>
          </ToolStrip>
          <Workspace>
            <Panel>
              <PanelTitle>Dokumentenübersicht</PanelTitle>
              <PanelTools>
                <Grip $after={2} />
                <IconButton type="button" aria-label="Sperren"><Lock /></IconButton>
                <Split $gap={1} />
                <IconButton type="button" $width={25} aria-label="Desktop"><Monitor /></IconButton>
                <Split $gap={1} />
                <IconButton type="button" aria-label="Zurück"><DocArrow /></IconButton>
                <IconButton type="button" aria-label="Vor"><DocArrow grey /></IconButton>
                <Split $gap={3} />
                <ActionButton type="button" $live $first><Hierarchy />Sendetiefe</ActionButton>
              </PanelTools>
              <TreeArea>
                <TreeList role="tree">
                  {nodes.map((n, i) => <TreeNode key={i} index={i} />)}
                </TreeList>
                <TreeScroll>
                  <ScrollArrow type="button" aria-label="Nach oben"><Caret up /></ScrollArrow>
                  <Thumb><svg width="8" height="7" viewBox="0 0 8 7"><path d="M0 .500h8M0 3.500h8M0 6.500h8" stroke="#333" /></svg></Thumb>
                  <Spacer />
                  <ScrollArrow type="button" aria-label="Nach unten"><Caret /></ScrollArrow>
                </TreeScroll>
              </TreeArea>
            </Panel>
            <Panel>
              <PanelTitle>Voransicht</PanelTitle>
              <PanelTools>
                <Grip $after={3} />
                <IconButton type="button" $edge="#d6a53a" $fill="linear-gradient(#fff0a8, #fbd04e)" aria-label="Sperren"><Lock /></IconButton>
                <IconButton type="button" aria-label="Desktop"><Monitor /></IconButton>
              </PanelTools>
              <ViewerTools>
                <ViewerGrip />
                <IconButton type="button" $width={35} $height={30} aria-label="Drucken"><Printer /></IconButton>
                <IconButton type="button" $width={35} $height={30} aria-label="Speichern"><Floppy /></IconButton>
                <IconButton type="button" $width={35} $height={30} aria-label="Suchen"><Binoculars /></IconButton>
                <IconButton type="button" $width={33} $height={30} aria-label="E-Mail"><Card /></IconButton>
                <IconButton type="button" $width={34} $height={30} aria-label="Zusammenarbeit"><People /></IconButton>
                <Caret />
                <Split $height={24} $gap={8} />
                <IconButton type="button" $width={26} $height={30} aria-label="Web"><GlobeStar /></IconButton>
                <ViewerGrip $before={9} $after={1} />
                <IconButton type="button" $width={30} $height={30} aria-label="Vorherige Seite"><BigArrow /></IconButton>
                <IconButton type="button" $width={30} $height={30} aria-label="Nächste Seite"><BigArrow down /></IconButton>
                <Field $width={26} $align="center" defaultValue="1" aria-label="Seite" />
                <PageCount>/ 1</PageCount>
                <ViewerGrip $before={7} $after={3} />
                <IconButton type="button" $width={24} $height={24} aria-label="Verkleinern"><ZoomDot /></IconButton>
                <IconButton type="button" $width={24} $height={24} aria-label="Vergrößern"><ZoomDot plus /></IconButton>
                <Field $width={44} defaultValue="42,1%" aria-label="Zoom" />
                <IconButton type="button" $width={16} aria-label="Zoomstufen"><Caret /></IconButton>
                <ViewerGrip $before={4} $after={4} />
                <IconButton type="button" $width={34} $height={30} aria-label="Seitenbreite"><FitWidth /></IconButton>
                <IconButton type="button" $width={32} $height={30} $edge="#a9a9a9" $fill="#d2d2d2" aria-label="Ganze Seite"><FitPage /></IconButton>
                <ViewerGrip $before={5} $after={3} />
                <Field $width={112} placeholder="Suchen" aria-label="Suchen" />
                <IconButton type="button" $width={10} aria-label="Suchoptionen"><Caret /></IconButton>
              </ViewerTools>
              <Viewer>
                <SideStrip>
                  <IconButton type="button" $width={26} $height={26} aria-label="Seiten"><Pages /></IconButton>
                  <IconButton type="button" $width={26} $height={26} aria-label="Suche"><Binoculars size={20} /></IconButton>
                  <Spacer />
                  <IconButton type="button" $width={26} $height={26} aria-label="Kommentare"><Chat /></IconButton>
                  <IconButton type="button" $width={26} $height={26} aria-label="Anlagen"><Clip /></IconButton>
                </SideStrip>
                <Canvas>
                  <Drawing />
                  <SizeBadge>420 x 297 mm</SizeBadge>
                </Canvas>
                <ViewerScroll>
                  <ScrollArrow type="button" aria-label="Seite nach oben"><Caret up color="#777" /></ScrollArrow>
                  <ScrollArrow type="button" aria-label="Seite nach unten"><Caret color="#777" /></ScrollArrow>
                </ViewerScroll>
              </Viewer>
              <Tabs>
                <Tab type="button"><TabDoc />Eigenschaften</Tab>
                <Tab type="button" $active><Eye />Voransicht</Tab>
                <Tab type="button">Revisionshistorie</Tab>
              </Tabs>
            </Panel>
          </Workspace>
        </Client>
      </Window>
    </>
  );
}
